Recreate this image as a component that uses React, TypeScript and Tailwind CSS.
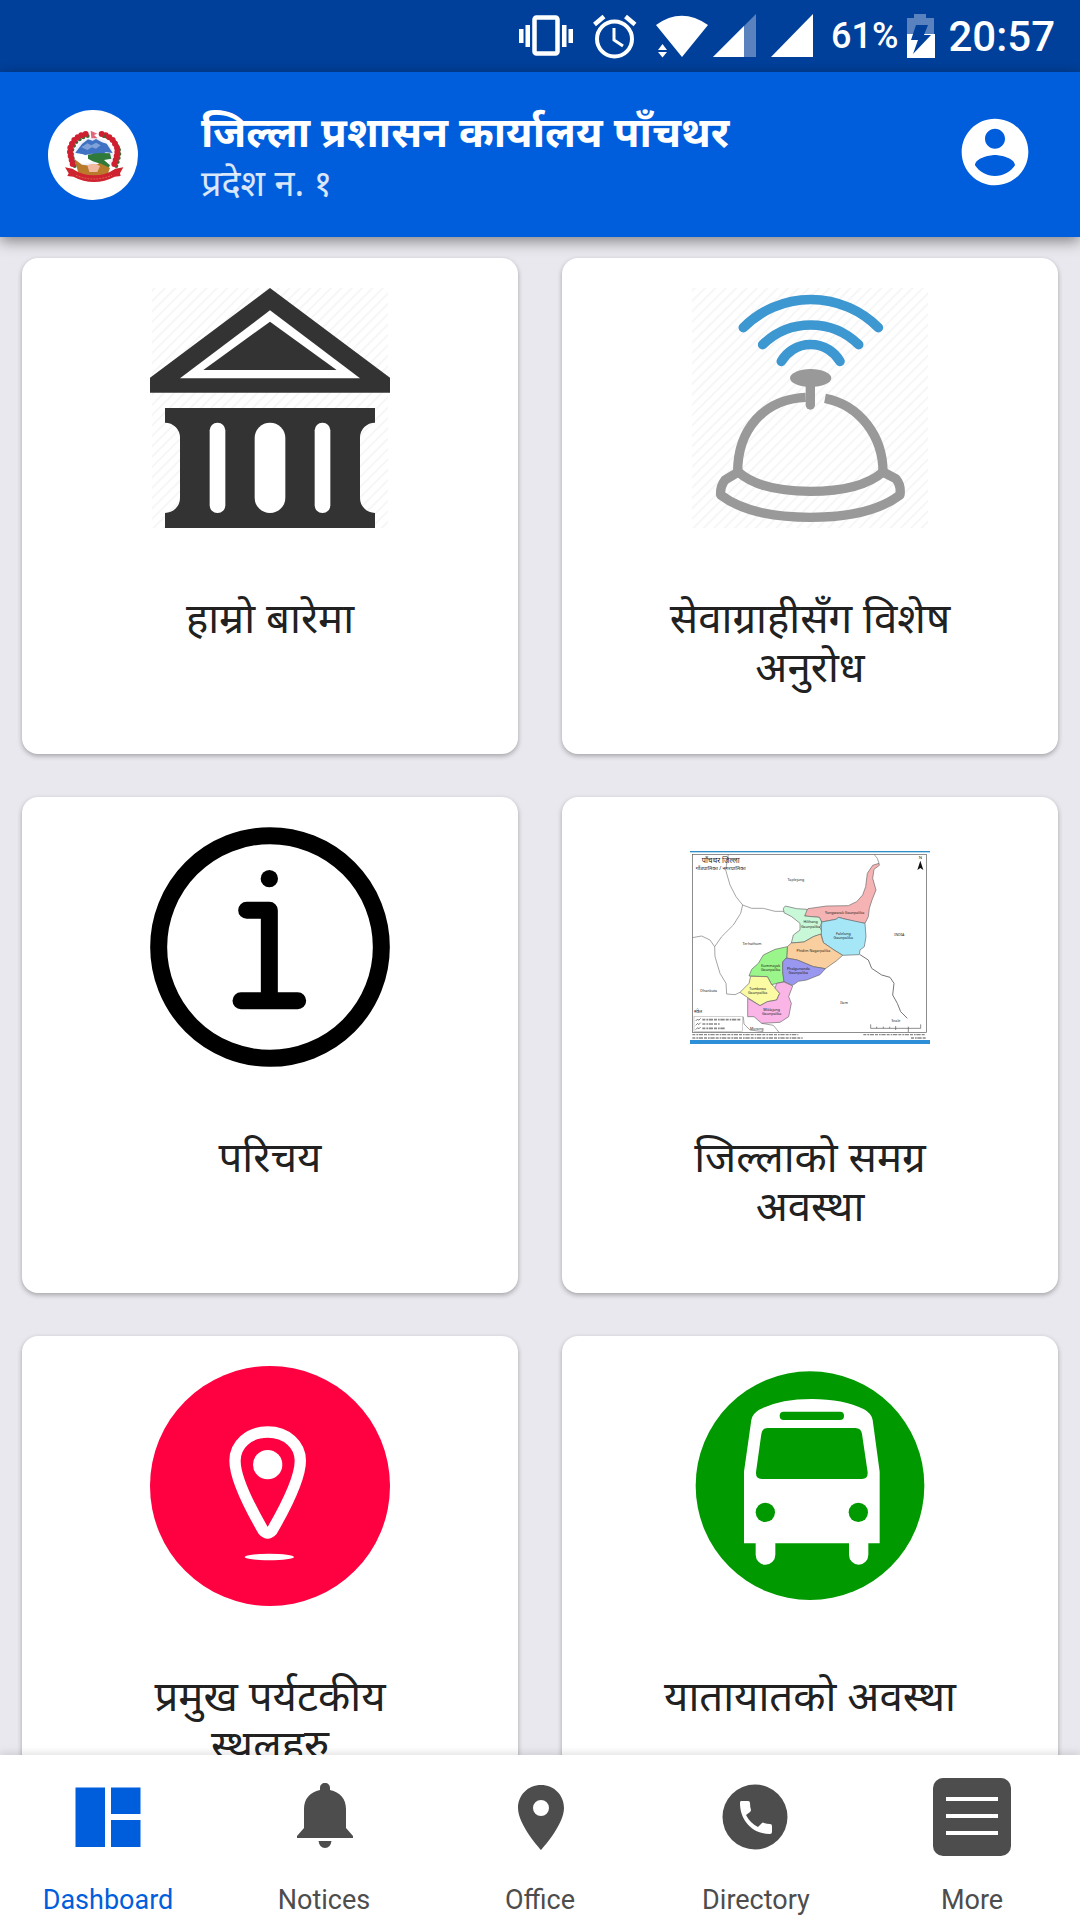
import type { ReactNode } from "react";

const devanagari = "font-['Noto_Sans','Noto_Sans_Devanagari',sans-serif]";

function StatusBar() {
  return (
    <div className="flex h-[72px] shrink-0 items-center justify-end bg-[#00409b] pr-[25px] font-['Roboto',sans-serif] font-medium text-white">
      <svg viewBox="0 0 300 72" className="h-[72px] w-[300px]" fill="#fff" aria-hidden="true">
        <rect x="21.500" y="17.500" width="23" height="36" rx="2" fill="none" stroke="#fff" strokeWidth="4.500" />
        <path d="M6 29h4.500v14H6zM12.500 25H17v22h-4.500zM49 25h4.500v22H49zM55.500 29H60v14h-4.500z" />
        <circle cx="101.500" cy="39" r="17.500" fill="none" stroke="#fff" strokeWidth="4" />
        <path d="M101 28v12l9 6" fill="none" stroke="#fff" strokeWidth="3" />
        <path d="M81.500 24.500l9.500-8M112.500 16.500l9.500 8" stroke="#fff" strokeWidth="4.500" />
        <path d="M143 25Q168.500 6.500 195 25L169 57z" />
        <path d="M145 50l4.500-6 4.500 6zM145 52l4.500 5.500 4.500-5.500z" />
        <path d="M200 57L243 14v43z" opacity=".35" />
        <path d="M200 57l31-31v31z" />
        <path d="M258 57l42-43v43z" />
      </svg>
      <span className="ml-[18px] text-[36px]">61%</span>
      <svg viewBox="0 0 30 44" className="ml-2 h-[44px] w-[30px]" aria-hidden="true">
        <path d="M1 4h7V0h12v4h8v16H1z" fill="#fff" opacity=".35" />
        <path d="M1 20h28v24H1z" fill="#fff" />
        <path d="M10 11h12l-4 10h7L7 40l5-14H5z" fill="#00409b" />
      </svg>
      <span className="ml-3 text-[42px]">20:57</span>
    </div>
  );
}

const wreath = [
  [124, 106], [113, 112], [103, 120], [96, 131], [91, 143], [90, 156], [92, 168], [95, 180], [98, 192],
  [197, 106], [208, 112], [218, 120], [225, 131], [231, 143], [232, 156], [230, 168], [227, 180], [223, 192],
  [137, 102], [185, 102],
];

function Emblem() {
  return (
    <svg viewBox="24 30 270 270" className="size-[90px] shrink-0" aria-label="नेपाल सरकार" role="img">
      <circle cx="159" cy="165" r="135" fill="#fff" />
      <ellipse cx="161" cy="165" rx="58" ry="52" fill="#eef3fb" />
      <path d="M106 158l20-26 18-14 14 4 10-5 18 10 14 4 18 28-20-2-18 8-24-4-20 4z" fill="#3f72c2" />
      <path d="M124 142l18-12 12 6 14-8 14 8-14 10-12-4-14 8z" fill="#7fa3d9" />
      <path d="M106 164q14-6 26 1t28 4l40-2 10 8-4 22-22 8-20-20-40 8-22-14z" fill="#fff" />
      <path d="M144 164q30-8 66-4l4 16-22 4 18 16-8 14-16-4-10-16-18-6-14-8z" fill="#2f7a3b" />
      <path d="M104 178l22 16 30 4 24-8 30 14-10 26h-82z" fill="#b97a2b" />
      <path d="M142 196q18-10 38 2l-8 18h-24z" fill="#f0b9a0" />
      {wreath.map(([x, y]) => (
        <g key={`${x}-${y}`}>
          <circle cx={x + 6} cy={y + 6} r="6" fill="#3b6a35" />
          <circle cx={x} cy={y} r="9" fill="#cf2031" />
        </g>
      ))}
      <path d="M152 92l20 9-10 4 11 10h-19z" fill="#e2667a" />
      <path d="M75 202l22 4q30 20 65 20t64-20l24-4-10 18 2 8-18 2q-30 16-62 16t-62-16l-18-2 4-8z" fill="#cf2430" />
      <path d="M108 226q52 22 108 0" fill="none" stroke="#dd6f5c" strokeWidth="3" strokeDasharray="5 4" />
    </svg>
  );
}

function Header() {
  return (
    <header className="z-10 flex h-[165px] shrink-0 items-center bg-[#005edd] pr-[45px] pl-12 shadow-[0_4px_14px_rgba(0,0,0,0.45)]">
      <Emblem />
      <div className={`ml-[63px] flex-1 pt-1 ${devanagari} text-white`}>
        <h1 className="text-[42px] leading-[52px] font-bold">जिल्ला प्रशासन कार्यालय पाँचथर</h1>
        <p className="text-[36px] leading-[52px] text-white/85">प्रदेश न. १</p>
      </div>
      <button type="button" aria-label="Account" className="pb-1.5 text-white">
        <svg viewBox="0 0 24 24" className="size-20" fill="currentColor">
          <path d="M12 2C6.480 2 2 6.480 2 12s4.480 10 10 10 10-4.480 10-10S17.520 2 12 2zm0 3c1.660 0 3 1.340 3 3s-1.340 3-3 3-3-1.340-3-3 1.340-3 3-3zm0 14.200c-2.500 0-4.710-1.280-6-3.220.030-1.990 4-3.080 6-3.080 1.990 0 5.970 1.090 6 3.080-1.290 1.940-3.500 3.220-6 3.220z" />
        </svg>
      </button>
    </header>
  );
}

function Hatch({ id }: { id: string }) {
  return (
    <>
      <defs>
        <pattern id={id} width="22" height="22" patternUnits="userSpaceOnUse" patternTransform="rotate(45)">
          <rect width="6" height="22" fill="#f6f6f6" />
        </pattern>
      </defs>
      <rect x="66" y="54" width="708" height="720" fill={`url(#${id})`} />
    </>
  );
}

function BankPicture() {
  return (
    <svg viewBox="60 54 720 720" className="size-60">
      <Hatch id="bank-hatch" />
      <path d="M420 54L780 323V368H60V323z" fill="#333" />
      <path d="M420 121L690 325H150z" fill="#fff" />
      <path d="M420 155L620 300H220z" fill="#333" />
      <path d="M105 414H735V458A45 45 0 0 0 690 503V684A45 45 0 0 0 735 729V774H105V729A45 45 0 0 0 150 684V503A45 45 0 0 0 105 458z" fill="#333" />
      <g fill="#fff">
        <rect x="239" y="458" width="47" height="271" rx="23" />
        <rect x="374" y="458" width="92" height="271" rx="46" />
        <rect x="554" y="458" width="47" height="271" rx="23" />
      </g>
    </svg>
  );
}

function BellPicture() {
  return (
    <svg viewBox="60 54 720 720" className="size-60" fill="none" strokeLinecap="round">
      <Hatch id="bell-hatch" />
      <g stroke="#3d97d1" strokeWidth="29">
        <path d="M220 173A285 285 0 0 1 625 173" />
        <path d="M278 224A205 205 0 0 1 566 224" />
        <path d="M334 274A102 102 0 0 1 510 274" />
      </g>
      <g stroke="#999" strokeWidth="28">
        <path d="M421 345V405" />
        <path d="M407 382C280 388 203 480 203 606" strokeLinecap="butt" />
        <path d="M465 385C570 405 639 500 639 606" strokeLinecap="butt" />
        <path d="M205 606Q270 664 421 664T639 606" />
        <path d="M205 606L165 630Q150 650 152 675Q240 742 421 742T690 675Q694 645 677 626L639 606" strokeLinejoin="round" />
      </g>
      <ellipse cx="422" cy="324" rx="62" ry="27" fill="#999" />
    </svg>
  );
}

function InfoPicture() {
  return (
    <svg viewBox="60 51 720 720" className="size-60" fill="none" stroke="#000" strokeWidth="51" strokeLinecap="round" strokeLinejoin="round">
      <circle cx="420" cy="411" r="334" />
      <path d="M350 301H418V572M333 572H503" />
      <circle cx="418" cy="206" r="26" fill="#000" stroke="none" />
    </svg>
  );
}

const districts = [
  { fill: "#f6b3b3", d: "M374 216L384 206 440 198 505 197 530 185 548 165 557 140 562 100 578 76 597 70 598 76 582 88 578 115 588 150 576 180 568 205 565 230 555 250 530 246 490 236 476 232 468 238 425 246 418 232 374 228z" },
  { fill: "#c8f8d8", d: "M310 205L316 198 350 206 382 208 374 228 418 232 425 246 420 262 428 281 400 290 372 306 334 309 340 285 360 270 360 250 335 230 312 218z" },
  { fill: "#a5e6f7", d: "M425 246L468 238 476 232 490 236 555 250 558 290 553 320 540 330 538 344 488 346 462 330 430 308 424 285z" },
  { fill: "#f9cf9f", d: "M322 320L334 309 372 306 400 290 422 282 430 308 462 330 488 346 470 362 436 386 400 380 352 360 320 354z" },
  { fill: "#9af58a", d: "M207 408L215 388 235 370 250 345 285 328 322 320 320 354 308 366 308 395 312 425 275 434 262 410z" },
  { fill: "#9a97f1", d: "M308 366L318 354 352 360 400 380 436 386 420 404 380 420 355 424 338 436 312 425 308 395z" },
  { fill: "#fbfba4", d: "M180 457L207 430 212 409 262 410 275 434 288 445 299 460 290 480 262 485 240 497 205 474z" },
  { fill: "#fab5e6", d: "M203 475L240 497 262 485 290 480 299 460 285 445 290 430 312 426 338 438 326 470 334 490 326 530 300 547 245 550 222 530 203 530z" },
];

const mapLabels: [number, number, string][] = [
  [348, 122, "Taplejung"], [494, 221, "Yangwarak Gaunpalika"], [392, 250, "Hilihang"], [392, 263, "Gaunpalika"],
  [490, 284, "Falelung"], [490, 297, "Gaunpalika"], [400, 335, "Phidim Nagarpalika"], [216, 314, "Terhathum"],
  [272, 381, "Kummayak"], [272, 393, "Gaunpalika"], [355, 390, "Phalgunanda"], [355, 403, "Gaunpalika"],
  [233, 449, "Tumbewa"], [233, 462, "Gaunpalika"], [275, 512, "Miklajung"], [275, 525, "Gaunpalika"],
  [658, 288, "INDIA"], [86, 455, "Dhankuta"], [492, 491, "Ilam"], [230, 570, "Morang"], [648, 546, "Scale"],
];

function MapPicture() {
  return (
    <svg viewBox="30 -39 720 720" className="size-60 font-['Noto_Sans',sans-serif]">
      <rect x="30" y="33" width="720" height="4" fill="#2d8ec9" />
      <rect x="30" y="600" width="720" height="12" fill="#2d8fd8" />
      <rect x="37" y="43" width="702" height="534" fill="#fff" stroke="#555" strokeWidth="2" />
      <g fill="none" stroke="#777" strokeWidth="2">
        <path d="M145 43L137 90 150 135 168 170 188 195 182 220 160 255 125 290 104 320 105 350 120 400 138 430 140 462 165 464 180 457" />
        <path d="M188 195L215 205 250 205 285 214 312 214M37 293L65 288 90 300 104 320M582 43L592 55 597 70" />
        <path d="M540 344L565 360 575 385 605 405 630 412 642 430 638 465 652 490 662 515 682 535" strokeWidth="3" />
        <path d="M190 530L192 552 210 570 250 575M245 550L280 556 297 577" />
      </g>
      {districts.map((district) => (
        <path key={district.fill} d={district.d} fill={district.fill} stroke="#666" strokeWidth="2" />
      ))}
      <g fontSize="11" fill="#222" textAnchor="middle">
        {mapLabels.map(([x, y, label]) => (
          <text key={`${x}-${y}`} x={x} y={y}>{label}</text>
        ))}
      </g>
      <g fill="#222" textAnchor="middle">
        <text x="122" y="69" fontSize="22">पाँचथर जिल्ला</text>
        <text x="122" y="89" fontSize="16">गाँउपालिका / नगरपालिका</text>
        <text x="721" y="58" fontSize="13">N</text>
        <text x="54" y="520" fontSize="12">संकेत</text>
      </g>
      <path d="M721 62L712 90 721 84 730 90z" fill="#111" />
      <rect x="42" y="530" width="145" height="44" fill="#fff" stroke="#777" />
      <path d="M47 543l6-6 3 4 6-6M47 556l6-6 3 4 6-6M47 569l6-6 3 4 6-6" fill="none" stroke="#444" strokeWidth="2" />
      <g stroke="#888" strokeWidth="5" strokeDasharray="9 3 5 2 13 3">
        <path d="M67 539H184M67 552H120M67 565H136" />
        <path d="M37 584H355M37 594H368M550 584H737M693 594H737" strokeWidth="4" />
      </g>
      <path d="M572 553V565H722V553M590 560V565M610 560V565M629 560V565M647 558V570M685 560V576" fill="none" stroke="#555" strokeWidth="2" />
    </svg>
  );
}

function PlacePicture() {
  return (
    <svg viewBox="60 48 720 720" className="size-60">
      <circle cx="420" cy="408" r="360" fill="#ff0041" />
      <path d="M413 246C355 246 315 285 315 332C315 390 370 490 400 542Q413 556 426 542C456 490 511 390 511 332C511 285 471 246 413 246z" fill="none" stroke="#fff" strokeWidth="34" strokeLinejoin="round" />
      <circle cx="413" cy="344" r="44" fill="#fff" />
      <ellipse cx="418" cy="621" rx="74" ry="10" fill="#fff" />
    </svg>
  );
}

function BusPicture() {
  return (
    <svg viewBox="60 48 720 720" className="size-60">
      <circle cx="420" cy="407" r="343" fill="#090" />
      <path d="M222 580V365L244 210Q248 190 270 178Q330 147 425 147T582 178Q604 190 608 210L629 365V580H595V614A29 30 0 0 1 537 614V580H316V614A29 30 0 0 1 257 614V580z" fill="#fff" />
      <g fill="#090">
        <rect x="329" y="185" width="193" height="25" rx="12" />
        <path d="M294 234H556Q574 234 576 252L593 367Q594 387 576 387H275Q257 387 258 367L274 252Q276 234 294 234z" />
        <circle cx="286" cy="487" r="29" />
        <circle cx="565" cy="487" r="29" />
      </g>
    </svg>
  );
}

const tiles: { label: string; picture: ReactNode }[] = [
  { label: "हाम्रो बारेमा", picture: <BankPicture /> },
  { label: "सेवाग्राहीसँग विशेष अनुरोध", picture: <BellPicture /> },
  { label: "परिचय", picture: <InfoPicture /> },
  { label: "जिल्लाको समग्र अवस्था", picture: <MapPicture /> },
  { label: "प्रमुख पर्यटकीय स्थलहरु", picture: <PlacePicture /> },
  { label: "यातायातको अवस्था", picture: <BusPicture /> },
];

function Tile({ label, picture }: { label: string; picture: ReactNode }) {
  return (
    <button
      type="button"
      className="flex aspect-square flex-col items-center rounded-2xl bg-white pt-[30px] shadow-[0_2px_5px_rgba(0,0,0,0.3)]"
    >
      {picture}
      <span className={`mt-16 max-w-[300px] text-center ${devanagari} text-[42px] leading-[49px] text-[#212121]`}>
        {label}
      </span>
    </button>
  );
}

function NavIcon({ children }: { children: ReactNode }) {
  return (
    <svg viewBox="0 0 78 78" className="size-[78px]" fill="currentColor" aria-hidden="true">
      {children}
    </svg>
  );
}

const navItems: { label: string; icon: ReactNode }[] = [
  { label: "Dashboard", icon: <path d="M6.500 9.500H36V69H6.500zM42 9.500H71.500V36H42zM42 42H71.500V69H42z" /> },
  {
    label: "Notices",
    icon: (
      <path d="M40 5C37 5 35 7 35 10V12C25 14 19 21 19 31V50L12 58V60H68V58L61 50V31C61 21 55 14 45 12V10C45 7 43 5 40 5zM33.500 63H46.500Q45.500 70 40 70T33.500 63z" />
    ),
  },
  {
    label: "Office",
    icon: (
      <path fillRule="evenodd" d="M40 7C27 7 17 17 17 30C17 47 40 72 40 72S63 47 63 30C63 17 53 7 40 7zM40 22A8 8 0 1 1 40 38A8 8 0 1 1 40 22z" />
    ),
  },
  {
    label: "Directory",
    icon: (
      <>
        <circle cx="38" cy="39" r="32.500" />
        <path d="M24 23H31Q33 23 33 25Q33 29 34 32Q34 33 33 34L29 37Q33 45 41 49L45 45Q46 44 47 45Q50 46 53 46Q55 46 55 48V54Q55 56 53 56C35 56 23 42 23 25Q23 23 24 23z" fill="#fff" />
      </>
    ),
  },
  {
    label: "More",
    icon: (
      <>
        <rect width="78" height="78" rx="10" />
        <path d="M13 19H65V23H13zM13 36H65V40H13zM13 53H65V57H13z" fill="#fff" />
      </>
    ),
  },
];

export default function App() {
  return (
    <div className="flex h-screen flex-col overflow-hidden bg-[#e8e8ee]">
      <StatusBar />
      <Header />
      <main className="min-h-0 flex-1 overflow-hidden px-[22px] pt-[21px]">
        <div className="grid grid-cols-2 gap-x-11 gap-y-[43px]">
          {tiles.map((tile) => (
            <Tile key={tile.label} {...tile} />
          ))}
        </div>
      </main>
      <nav className="z-10 grid h-[165px] shrink-0 grid-cols-5 bg-white font-['Roboto',sans-serif] text-[27px] shadow-[0_-2px_8px_rgba(0,0,0,0.12)]">
        {navItems.map(({ label, icon }, index) => (
          <a
            key={label}
            href={`#${label.toLowerCase()}`}
            aria-current={index === 0 ? "page" : undefined}
            className="flex flex-col items-center pt-[23px] text-[#4d4d4d] aria-[current=page]:text-[#005edd]"
          >
            <NavIcon>{icon}</NavIcon>
            <span className="mt-7 leading-8">{label}</span>
          </a>
        ))}
      </nav>
    </div>
  );
}
